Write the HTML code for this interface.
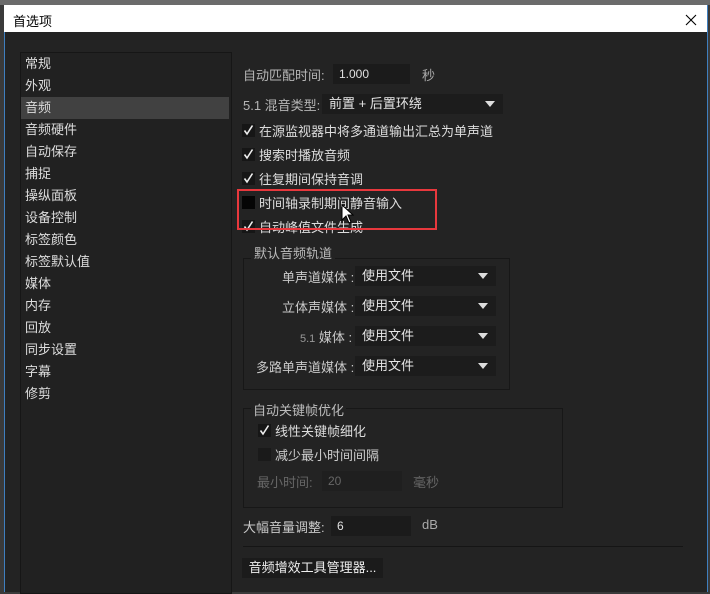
<!DOCTYPE html>
<html><head><meta charset="utf-8"><style>
body{margin:0;width:710px;height:592px;overflow:hidden;background:#3a3a3a;font-family:"Liberation Sans","Noto Sans CJK SC",sans-serif;font-size:12px;color:#c9c9c9;position:relative}
.a{position:absolute;white-space:nowrap}
#win{position:absolute;left:4px;top:5px;width:702px;height:587px;background:#232323;border-left:1px solid #3f7fbf;border-right:1px solid #3f7fbf}
#title{position:absolute;left:4px;top:5px;width:703px;height:27px;background:#fff;color:#000;font-size:13px}
.list{position:absolute;left:20px;top:52px;width:210px;height:540px;border:1px solid #161616;background:#212121}
.it{position:absolute;left:4px;height:22px;line-height:22px;width:200px;font-size:13px;color:#ddd}
.inp{position:absolute;background:#1b1b1b;height:20px;line-height:20px;padding-left:6px;color:#e0e0e0;box-sizing:border-box}
.dd{position:absolute;background:#1c1c1c;height:20px;line-height:20px;padding-left:7px;color:#e6e6e6;box-sizing:border-box;font-size:13px}
.dd:after{content:"";position:absolute;right:8px;top:7px;border-left:5px solid transparent;border-right:5px solid transparent;border-top:6px solid #ddd}
.cb{position:absolute;width:13px;height:13px;background:#161616}
.cb svg{position:absolute;left:1px;top:0}
.lbl{font-size:13px;margin-top:-1px}
.grp{position:absolute;border:1px solid #171717}
</style></head><body>
<div class="a" style="left:0;top:0;width:710px;height:5px;background:#6b6b6b"></div>
<div id="win"></div>
<div id="title"><span class="a" style="left:9px;top:6px">首选项</span><svg class="a" style="left:681px;top:9px" width="12" height="12" viewBox="0 0 12 12"><path d="M1 1L11 11M11 1L1 11" stroke="#000" stroke-width="1.1"/></svg></div>
<div class="list">
<div class="it" style="top:0">常规</div>
<div class="it" style="top:22px">外观</div>
<div class="it" style="top:44px;left:0;padding-left:4px;width:204px;background:#414141">音频</div>
<div class="it" style="top:66px">音频硬件</div>
<div class="it" style="top:88px">自动保存</div>
<div class="it" style="top:110px">捕捉</div>
<div class="it" style="top:132px">操纵面板</div>
<div class="it" style="top:154px">设备控制</div>
<div class="it" style="top:176px">标签颜色</div>
<div class="it" style="top:198px">标签默认值</div>
<div class="it" style="top:220px">媒体</div>
<div class="it" style="top:242px">内存</div>
<div class="it" style="top:264px">回放</div>
<div class="it" style="top:286px">同步设置</div>
<div class="it" style="top:308px">字幕</div>
<div class="it" style="top:330px">修剪</div>
</div>

<span class="a lbl" style="left:243px;top:66px;color:#b5b5b5">自动匹配时间:</span>
<div class="inp" style="left:333px;top:64px;width:77px">1.000</div>
<span class="a lbl" style="left:422px;top:66px;color:#aaa">秒</span>
<span class="a lbl" style="left:243px;top:96px;color:#b5b5b5">5.1 混音类型:</span>
<div class="dd" style="left:322px;top:94px;width:181px">前置 + 后置环绕</div>

<div class="cb" style="left:242px;top:124px"><svg width="11" height="12"><path d="M1.5 6.5L4 10L9.5 1.5" stroke="#eee" stroke-width="1.6" fill="none"/></svg></div><span class="a lbl" style="left:259px;top:122px;color:#ddd">在源监视器中将多通道输出汇总为单声道</span>
<div class="cb" style="left:242px;top:148px"><svg width="11" height="12"><path d="M1.5 6.5L4 10L9.5 1.5" stroke="#eee" stroke-width="1.6" fill="none"/></svg></div><span class="a lbl" style="left:259px;top:146px;color:#ddd">搜索时播放音频</span>
<div class="cb" style="left:242px;top:172px"><svg width="11" height="12"><path d="M1.5 6.5L4 10L9.5 1.5" stroke="#eee" stroke-width="1.6" fill="none"/></svg></div><span class="a lbl" style="left:259px;top:170px;color:#ddd">往复期间保持音调</span>
<div class="cb" style="left:242px;top:196px;background:#050505"></div><span class="a lbl" style="left:259px;top:194px;color:#ddd">时间轴录制期间静音输入</span>
<div class="cb" style="left:242px;top:220px"><svg width="11" height="12"><path d="M1.5 6.5L4 10L9.5 1.5" stroke="#eee" stroke-width="1.6" fill="none"/></svg></div><span class="a lbl" style="left:259px;top:218px;color:#ddd">自动峰值文件生成</span>
<div class="a" style="left:237px;top:189px;width:196px;height:37px;border:2px solid #e8383d"></div>
<svg class="a" style="left:341px;top:204px" width="14" height="20" viewBox="0 0 14 20"><path d="M1 1 L1 16 L5 12 L8 19 L10 18 L7 11 L12 11 Z" fill="#fff" stroke="#000" stroke-width="1"/></svg>

<div class="grp" style="left:243px;top:258px;width:265px;height:130px"></div>
<span class="a lbl" style="left:251px;top:244px;background:#232323;padding:0 3px;color:#bbb">默认音频轨道</span>
<span class="a lbl" style="left:282px;top:268px">单声道媒体 :</span><div class="dd" style="left:355px;top:266px;width:141px">使用文件</div>
<span class="a lbl" style="left:282px;top:298px">立体声媒体 :</span><div class="dd" style="left:355px;top:296px;width:141px">使用文件</div>
<span class="a lbl" style="left:300px;top:328px"><span style="font-size:11px;color:#999">5.1</span> 媒体 :</span><div class="dd" style="left:355px;top:326px;width:141px">使用文件</div>
<span class="a lbl" style="left:256px;top:358px">多路单声道媒体 :</span><div class="dd" style="left:355px;top:356px;width:141px">使用文件</div>

<div class="grp" style="left:243px;top:408px;width:318px;height:98px"></div>
<span class="a lbl" style="left:251px;top:401px;background:#232323;padding:0 2px;color:#bbb">自动关键帧优化</span>
<div class="cb" style="left:258px;top:424px"><svg width="11" height="12"><path d="M1.5 6.5L4 10L9.5 1.5" stroke="#eee" stroke-width="1.6" fill="none"/></svg></div><span class="a lbl" style="left:275px;top:422px;color:#ddd">线性关键帧细化</span>
<div class="cb" style="left:258px;top:448px;background:#1a1a1a"></div><span class="a lbl" style="left:275px;top:446px;color:#ccc">减少最小时间间隔</span>
<span class="a lbl" style="left:257px;top:473px;color:#666">最小时间:</span>
<div class="inp" style="left:322px;top:471px;width:80px;color:#666;background:#1f1f1f">20</div>
<span class="a lbl" style="left:413px;top:473px;color:#666">毫秒</span>

<span class="a lbl" style="left:243px;top:518px">大幅音量调整:</span>
<div class="inp" style="left:331px;top:516px;width:80px">6</div>
<span class="a lbl" style="left:422px;top:518px;color:#aaa">dB</span>
<div class="a" style="left:243px;top:546px;width:440px;height:1px;background:#151515"></div>
<div class="a" style="left:242px;top:558px;width:141px;height:20px;background:#1b1b1b;line-height:20px;text-align:center;font-size:13px;color:#eee">音频增效工具管理器...</div>
</body></html>
